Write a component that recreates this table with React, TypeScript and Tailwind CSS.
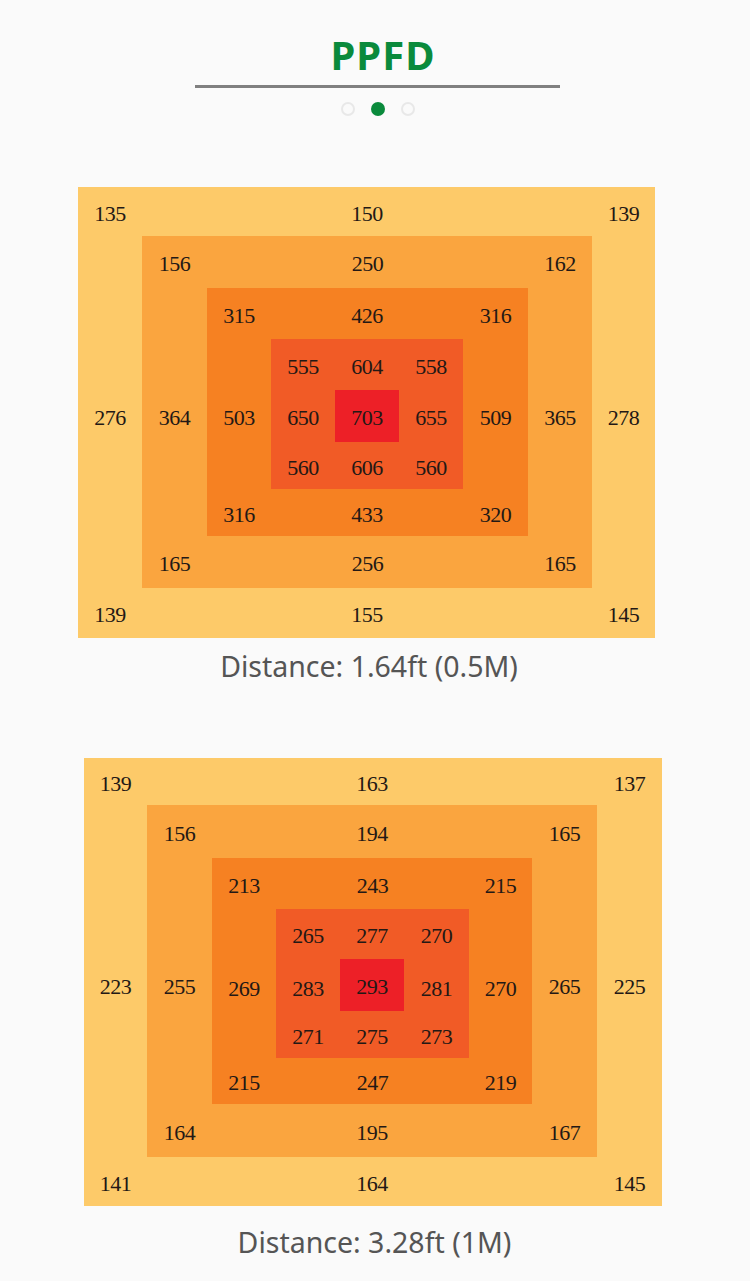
import React from "react";

type CellProps = { className?: string; children?: React.ReactNode };

function Cell({ className = "pt-[4px]", children }: CellProps) {
  return (
    <div className={`flex shrink-0 items-center justify-center ${className}`}>
      {children}
    </div>
  );
}

type LayerProps = {
  bg: string;
  colL: string;
  colR: string;
  rowT: string;
  rowB: string;
  midPad: string;
  top: [string, string, string];
  mid: [string, string];
  bot: [string, string, string];
  children: React.ReactNode;
};

function Layer({ bg, colL, colR, rowT, rowB, midPad, top, mid, bot, children }: LayerProps) {
  return (
    <div className={`flex flex-col ${bg}`}>
      <div className={`flex ${rowT}`}>
        <Cell className={`pt-[4px] ${colL}`}>{top[0]}</Cell>
        <Cell className="flex-1 pt-[4px]">{top[1]}</Cell>
        <Cell className={`pt-[4px] ${colR}`}>{top[2]}</Cell>
      </div>
      <div className="flex">
        <Cell className={`${midPad} ${colL}`}>{mid[0]}</Cell>
        {children}
        <Cell className={`${midPad} ${colR}`}>{mid[1]}</Cell>
      </div>
      <div className={`flex ${rowB}`}>
        <Cell className={`pt-[4px] ${colL}`}>{bot[0]}</Cell>
        <Cell className="flex-1 pt-[4px]">{bot[1]}</Cell>
        <Cell className={`pt-[4px] ${colR}`}>{bot[2]}</Cell>
      </div>
    </div>
  );
}

const numFont = "font-['Liberation_Serif',serif] text-[22px] leading-none tracking-[-0.5px] text-[#231815]";

function ChartOne() {
  return (
    <div className={numFont}>
      <Layer
        bg="bg-[#fdca69]"
        colL="w-[64px]"
        colR="w-[63px]"
        rowT="h-[49px]"
        rowB="h-[50px]"
        midPad="pt-[12px]"
        top={["135", "150", "139"]}
        mid={["276", "278"]}
        bot={["139", "155", "145"]}
      >
        <Layer
          bg="bg-[#faa53f]"
          colL="w-[65px]"
          colR="w-[64px]"
          rowT="h-[52px]"
          rowB="h-[52px]"
          midPad="pt-[12px]"
          top={["156", "250", "162"]}
          mid={["364", "365"]}
          bot={["165", "256", "165"]}
        >
          <Layer
            bg="bg-[#f68122]"
            colL="w-[64px]"
            colR="w-[65px]"
            rowT="h-[51px]"
            rowB="h-[47px]"
            midPad="pt-[8px]"
            top={["315", "426", "316"]}
            mid={["503", "509"]}
            bot={["316", "433", "320"]}
          >
            <Layer
              bg="bg-[#f15b26]"
              colL="w-[64px]"
              colR="w-[64px]"
              rowT="h-[51px]"
              rowB="h-[47px]"
              midPad="pt-[4px]"
              top={["555", "604", "558"]}
              mid={["650", "655"]}
              bot={["560", "606", "560"]}
            >
              <Cell className="h-[52px] w-[64px] bg-[#ed2027] pt-[4px]">703</Cell>
            </Layer>
          </Layer>
        </Layer>
      </Layer>
    </div>
  );
}

function ChartTwo() {
  return (
    <div className={numFont}>
      <Layer
        bg="bg-[#fdca69]"
        colL="w-[63px]"
        colR="w-[65px]"
        rowT="h-[47px]"
        rowB="h-[49px]"
        midPad="pt-[12px]"
        top={["139", "163", "137"]}
        mid={["223", "225"]}
        bot={["141", "164", "145"]}
      >
        <Layer
          bg="bg-[#faa53f]"
          colL="w-[65px]"
          colR="w-[65px]"
          rowT="h-[53px]"
          rowB="h-[53px]"
          midPad="pt-[12px]"
          top={["156", "194", "165"]}
          mid={["255", "265"]}
          bot={["164", "195", "167"]}
        >
          <Layer
            bg="bg-[#f68122]"
            colL="w-[64px]"
            colR="w-[63px]"
            rowT="h-[51px]"
            rowB="h-[46px]"
            midPad="pt-[11px]"
            top={["213", "243", "215"]}
            mid={["269", "270"]}
            bot={["215", "247", "219"]}
          >
            <Layer
              bg="bg-[#f15b26]"
              colL="w-[64px]"
              colR="w-[65px]"
              rowT="h-[50px]"
              rowB="h-[47px]"
              midPad="pt-[7px]"
              top={["265", "277", "270"]}
              mid={["283", "281"]}
              bot={["271", "275", "273"]}
            >
              <Cell className="h-[52px] w-[64px] bg-[#ed2027] pt-[4px]">293</Cell>
            </Layer>
          </Layer>
        </Layer>
      </Layer>
    </div>
  );
}

export default function App() {
  return (
    <div className="flex min-h-[1281px] w-[750px] flex-col bg-[#fafafa] font-['Noto_Sans',sans-serif]">
      <div className="mt-[31px] flex w-full justify-center pl-[16px]">
        <h1 className="text-[40px] font-bold leading-[48px] tracking-[1px] text-[#0a8a3c]">PPFD</h1>
      </div>
      <div className="ml-[195px] mt-[6px] h-[3px] w-[365px] bg-[#808080]" />
      <div className="ml-[341px] mt-[14px] flex items-center gap-[16px]">
        <span className="h-[14px] w-[14px] rounded-full border-2 border-[#e8e8e8]" />
        <span className="h-[14px] w-[14px] rounded-full bg-[#0a8a3c]" />
        <span className="h-[14px] w-[14px] rounded-full border-2 border-[#e8e8e8]" />
      </div>

      <div className="ml-[78px] mt-[71px] flex w-[577px] flex-col">
        <ChartOne />
        <p className="mt-[10px] pl-[5px] text-center text-[28.5px] leading-[36px] text-[#555555]">
          Distance: 1.64ft (0.5M)
        </p>
      </div>

      <div className="ml-[84px] mt-[74px] flex w-[578px] flex-col">
        <ChartTwo />
        <p className="mt-[18px] pl-[3px] text-center text-[28.5px] leading-[36px] text-[#555555]">
          Distance: 3.28ft (1M)
        </p>
      </div>
    </div>
  );
}
